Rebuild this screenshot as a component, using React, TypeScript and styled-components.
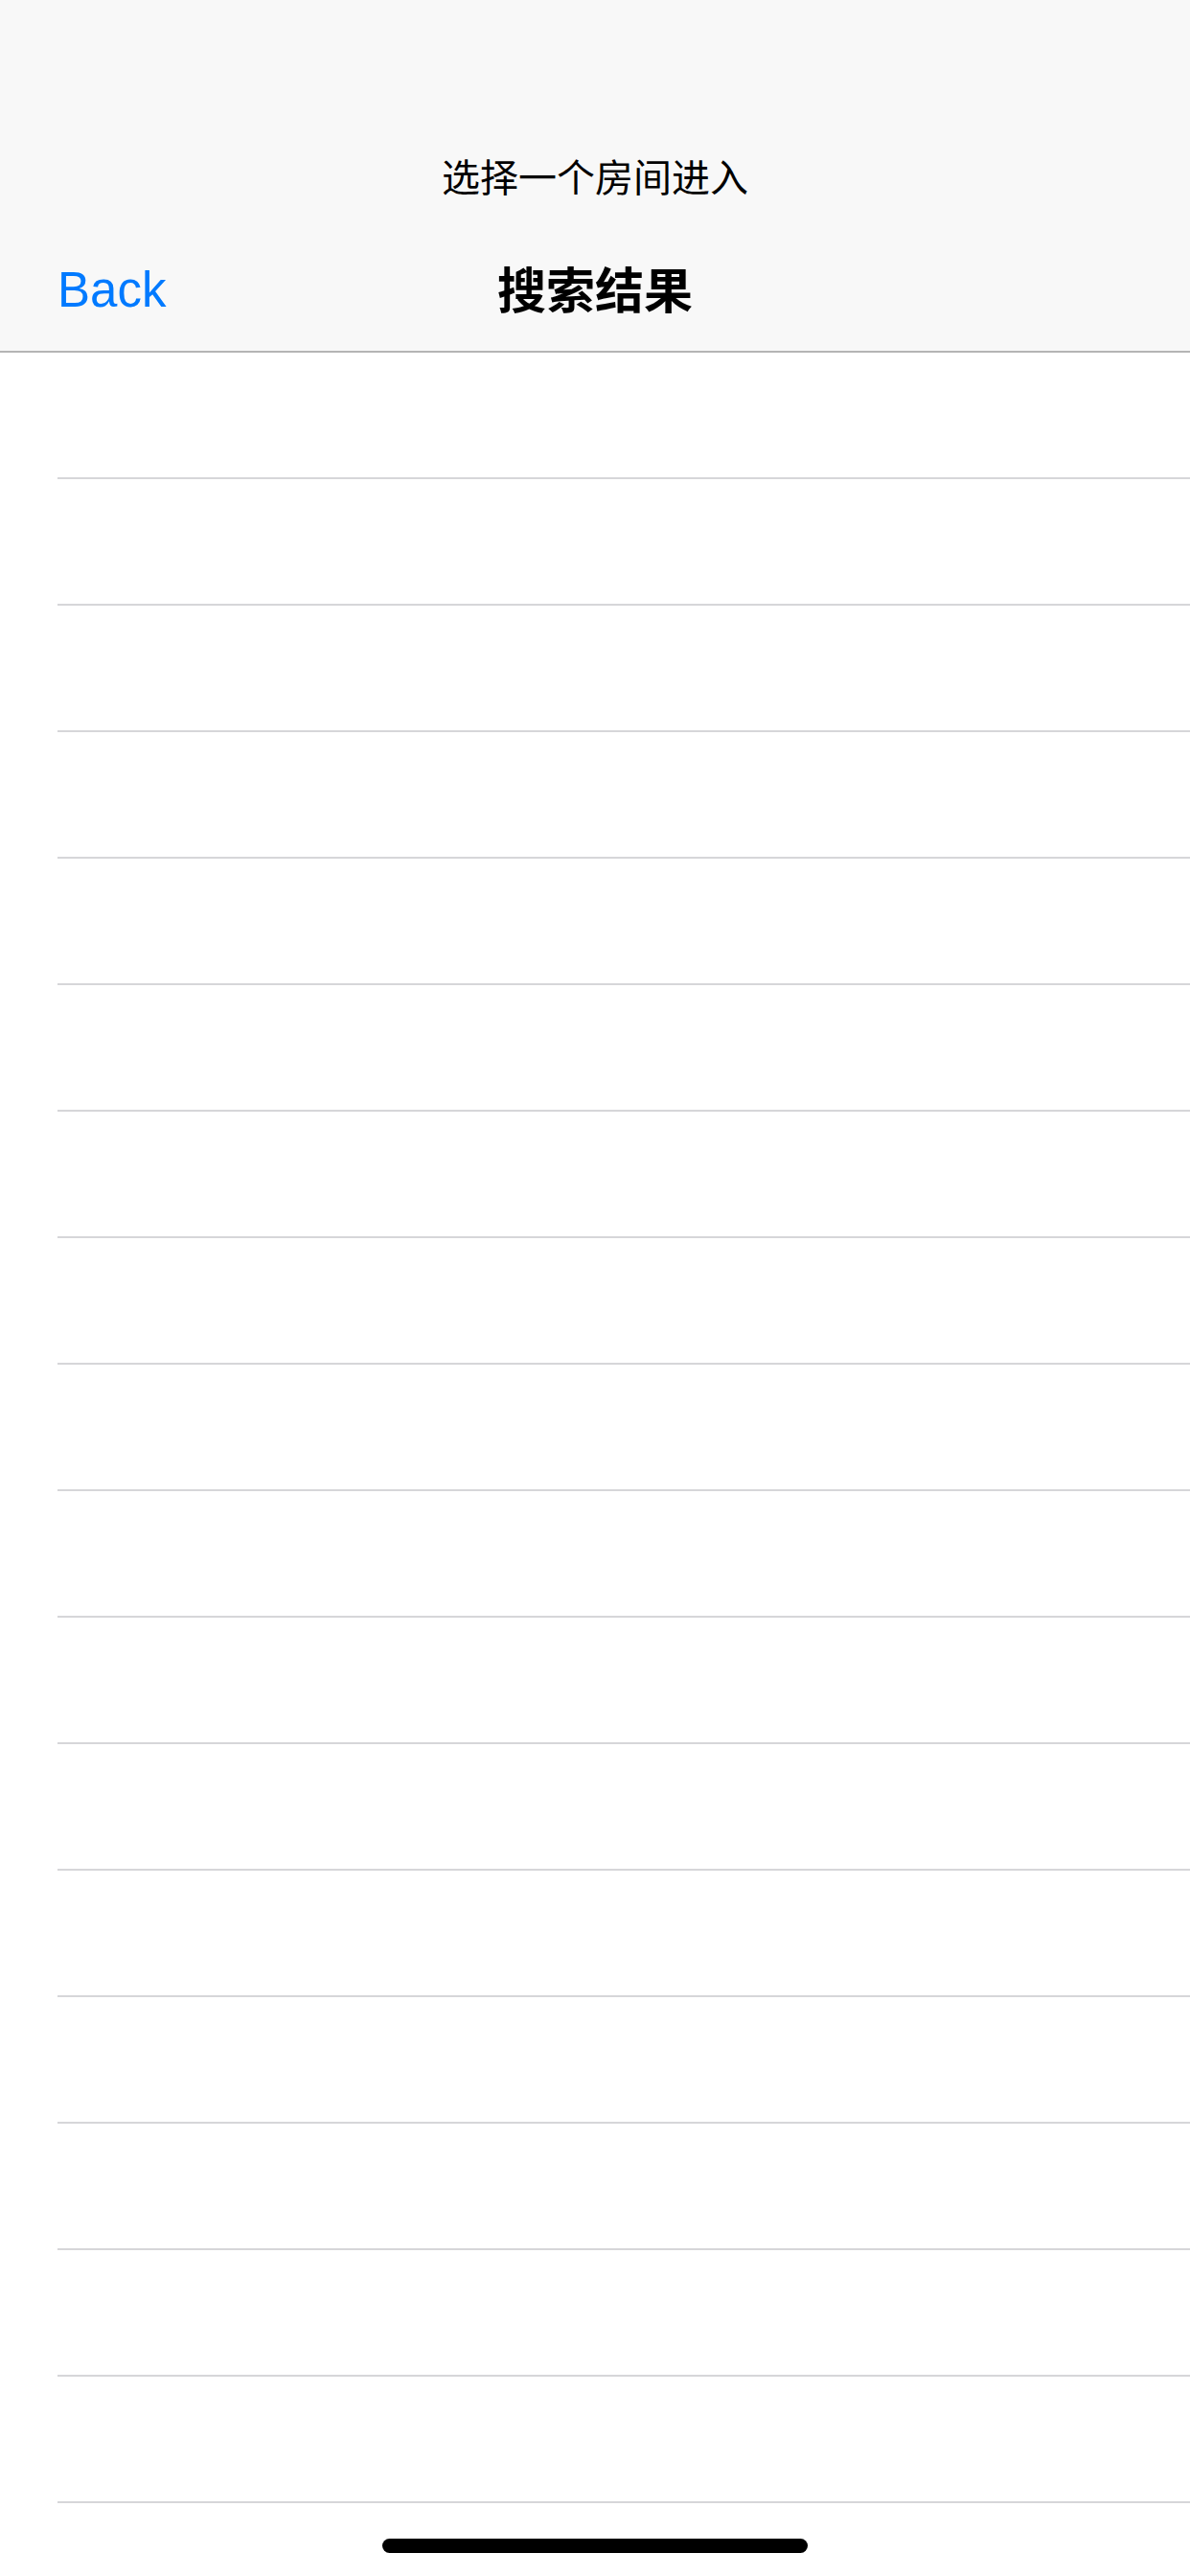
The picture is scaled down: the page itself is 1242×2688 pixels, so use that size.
import React from "react";
import styled, { createGlobalStyle } from "styled-components";

const GlobalStyle = createGlobalStyle`
  html, body {
    margin: 0;
    padding: 0;
    background: #ffffff;
  }
  body {
    font-family: "Liberation Sans", "Noto Sans CJK SC", sans-serif;
  }
`;

const Screen = styled.div`
  position: relative;
  width: 1242px;
  height: 2688px;
  overflow: hidden;
  background: #ffffff;
  display: flex;
  flex-direction: column;
`;

const Header = styled.header`
  background-color: #f8f8f8;
  border-bottom: 2px solid #b4b4b4;
  display: flex;
  flex-direction: column;
`;

const StatusSpace = styled.div`
  height: 132px;
`;

const Prompt = styled.div`
  height: 102px;
  display: flex;
  align-items: center;
  justify-content: center;
  font-family: "Noto Sans CJK SC", sans-serif;
  font-size: 40px;
  color: #000000;
`;

const NavBar = styled.div`
  height: 132px;
  display: grid;
  grid-template-columns: 1fr auto 1fr;
  align-items: center;
`;

const BackButton = styled.button`
  justify-self: start;
  border: none;
  background: none;
  padding: 4px 0 0 60px;
  font-family: "Liberation Sans", sans-serif;
  font-size: 51px;
  color: #007aff;
  cursor: pointer;
`;

const Title = styled.h1`
  margin: 0;
  font-family: "Noto Sans CJK SC", sans-serif;
  font-size: 51px;
  font-weight: 700;
  color: #000000;
`;

const List = styled.ul`
  list-style: none;
  margin: 0;
  padding: 0;
`;

const Row = styled.li`
  height: 132px;
  box-sizing: border-box;
  margin-left: 60px;
  border-bottom: 2px solid #d6d6d9;
`;

const HomeIndicator = styled.div`
  position: absolute;
  left: 50%;
  bottom: 24px;
  transform: translateX(-50%);
  width: 444px;
  height: 15px;
  border-radius: 8px;
  background: #000000;
`;

const rooms = Array.from({ length: 17 }, (_, i) => i);

const App = () => {
  return (
    <Screen>
      <GlobalStyle />
      <Header>
        <StatusSpace />
        <Prompt>选择一个房间进入</Prompt>
        <NavBar>
          <BackButton>Back</BackButton>
          <Title>搜索结果</Title>
          <span />
        </NavBar>
      </Header>
      <List>
        {rooms.map((room) => (
          <Row key={room} />
        ))}
      </List>
      <HomeIndicator />
    </Screen>
  );
};

export default App;
